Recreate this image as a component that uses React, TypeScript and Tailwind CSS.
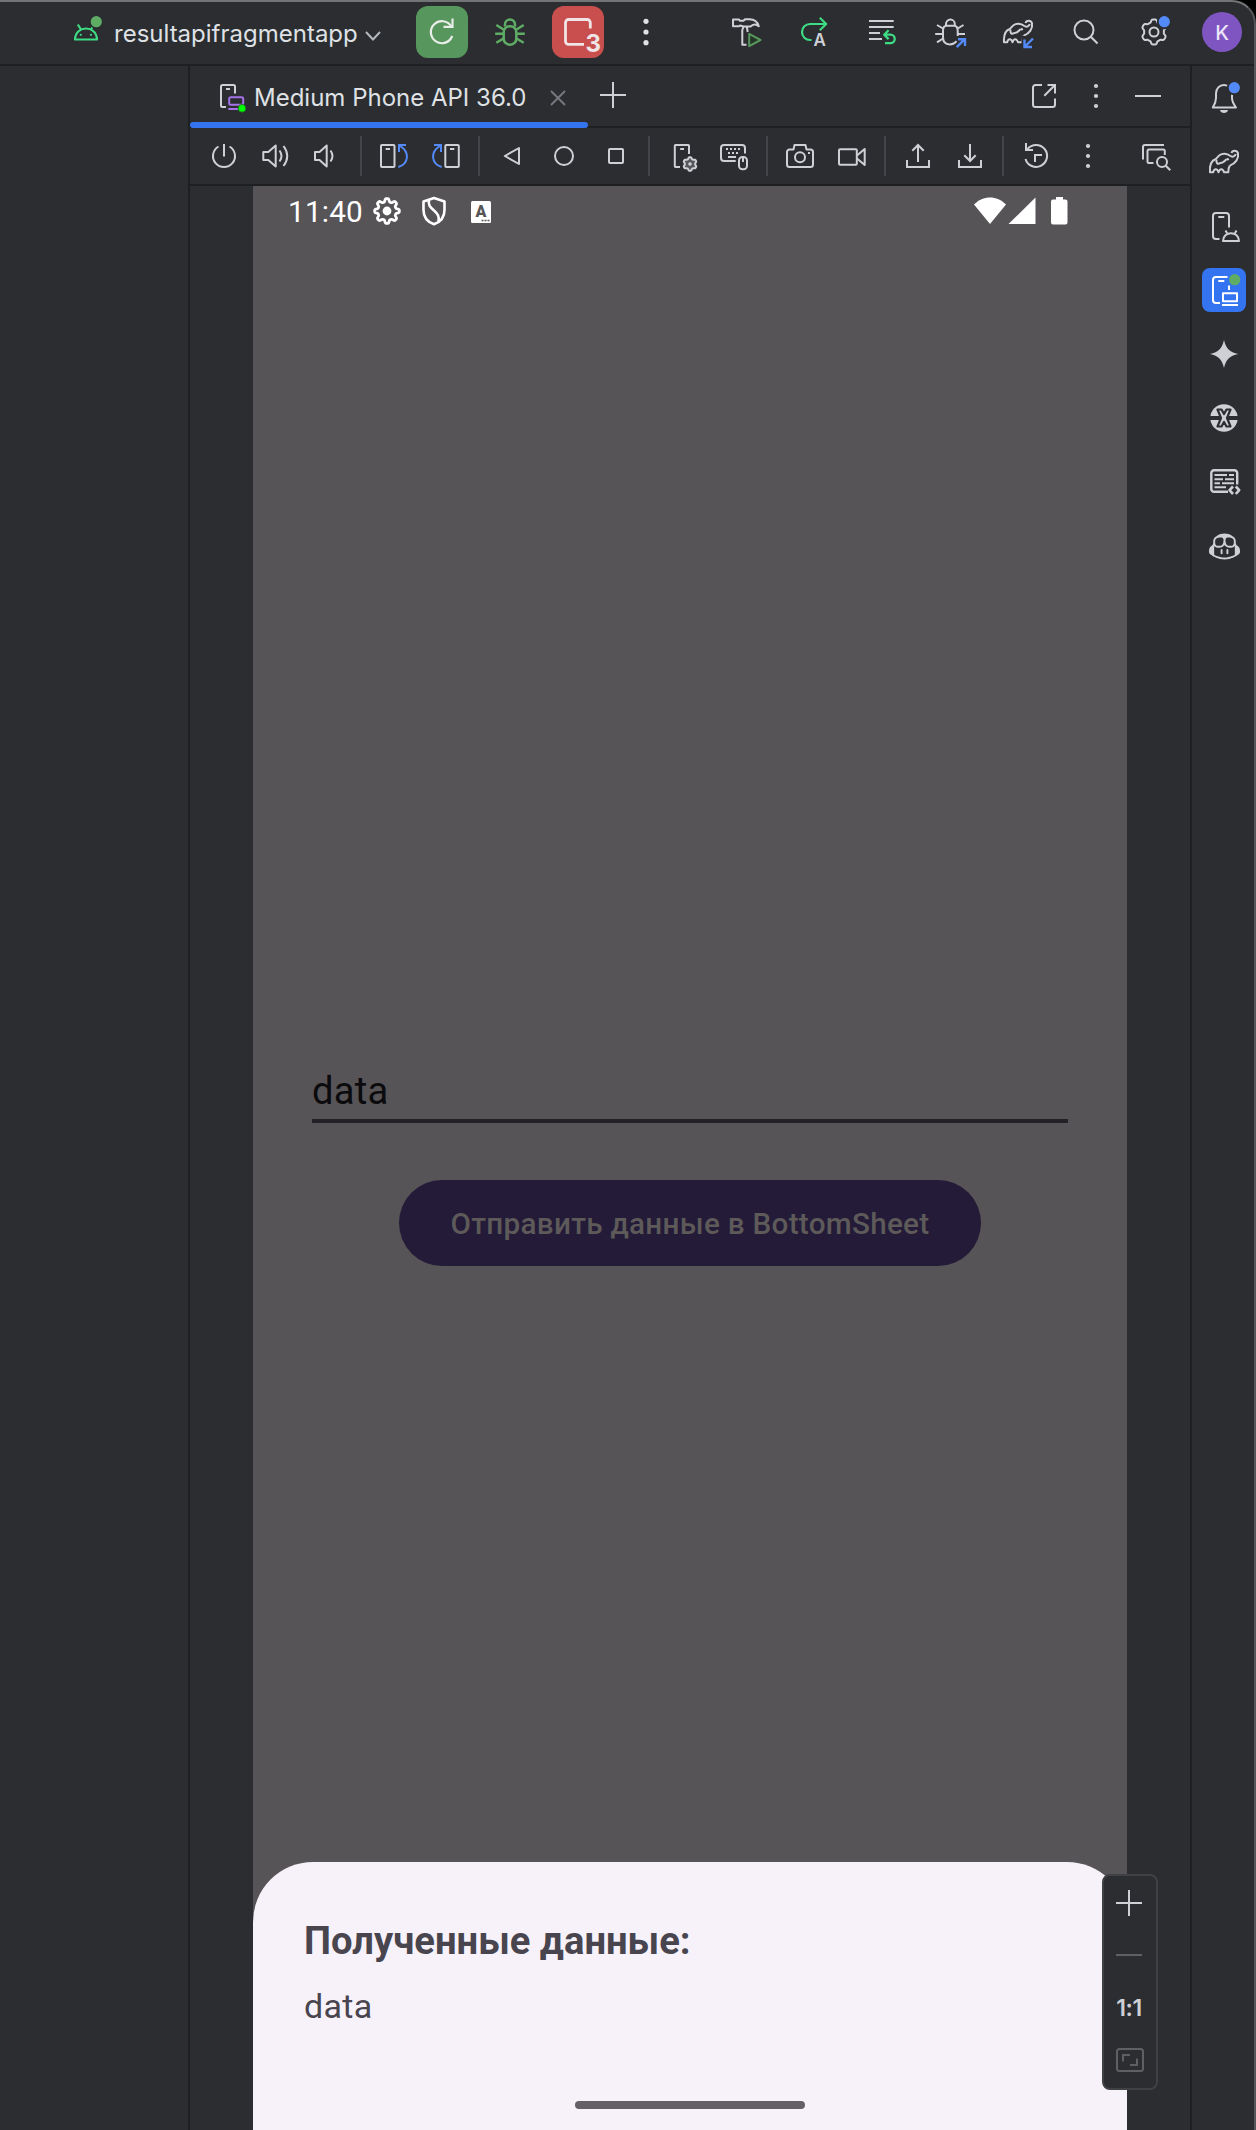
import type { ReactNode } from "react";
import { GoCopilot } from "react-icons/go";

const BG = "#2b2d30";
const BLUE = "#548af7";
const GREEN = "#3ddc84";

function Icon({ children, color = "#ced0d6", sw = 2 }: { children: ReactNode; color?: string; sw?: number }) {
  return (
    <svg
      width="32"
      height="32"
      viewBox="0 0 32 32"
      fill="none"
      stroke={color}
      strokeWidth={sw}
      strokeLinejoin="round"
      className="block shrink-0 overflow-visible"
    >
      {children}
    </svg>
  );
}

function gear(cx: number, cy: number, r: number, amp: number, teeth: number) {
  const pts: string[] = [];
  for (let i = 0; i < 120; i++) {
    const t = (i / 120) * Math.PI * 2;
    const wave = Math.tanh(2 * Math.cos(teeth * t));
    const rad = r + amp * wave;
    pts.push(`${(cx + rad * Math.sin(t)).toFixed(2)} ${(cy - rad * Math.cos(t)).toFixed(2)}`);
  }
  return `M${pts.join("L")}Z`;
}

const Badge = ({ color }: { color: string }) => (
  <circle cx="26.3" cy="5.7" r="5.6" fill={color} stroke="none" />
);

const Dots = ({ big = false }: { big?: boolean }) => (
  <Icon>
    <g fill={big ? "#dfe1e5" : "#ced0d6"} stroke="none">
      <circle cx="16" cy={big ? 5.3 : 6} r={big ? 2.6 : 2.1} />
      <circle cx="16" cy="16" r={big ? 2.6 : 2.1} />
      <circle cx="16" cy={big ? 26.7 : 26} r={big ? 2.6 : 2.1} />
    </g>
  </Icon>
);

const Elephant = ({ children }: { children?: ReactNode }) => (
  <Icon>
    <path d="M23.5 7C24.3 4 28.8 3.8 30 7.2C31 12.500 27.500 17.500 21.800 19.600" />
    <path d="M27.700 8C27.200 11 24 11.300 22 9.800C19 7.300 14.500 7 11.500 9.200C10 10.300 9 12 7.800 13C3.200 14.500 1.500 19.500 2 26.300H5.200C6.200 22.300 9.300 22.300 10.500 26.300C11.800 22.300 14.800 22.300 16 26.300H20.300C20.300 23.500 20.500 21.500 21.800 19.600" />
    <path d="M8.500 13.500C8 17 9.500 18.700 12 17.200C13.500 16.200 14 17.500 16 15.500C17 14.500 17.800 14.300 18.500 13" />
    <circle cx="19.700" cy="13.300" r="1.300" fill="#ced0d6" stroke="none" />
    {children}
  </Icon>
);

const Cell = ({ children }: { children: ReactNode }) => (
  <div className="flex size-[52px] shrink-0 items-center justify-center">{children}</div>
);

function TopBar() {
  return (
    <header className="flex h-16 shrink-0 items-center border-b-2 border-[#1e1f22] pb-0.5 pr-1.5 pl-[70px]">
      <div className="flex w-[346px] items-center">
        <Icon color={GREEN} sw={2.2}>
          <path d="M5 23.500C5.500 8.800 26.500 8.800 27 23.500Z" />
          <path d="M7.800 8.500L11.300 14M24.200 8.500L20.700 14" />
          <circle cx="10.800" cy="18.800" r="1.100" fill={GREEN} stroke="none" />
          <circle cx="21" cy="18.800" r="1.100" fill={GREEN} stroke="none" />
          <circle cx="26.300" cy="5.700" r="7.300" fill={BG} stroke="none" />
          <Badge color="#5fad65" />
        </Icon>
        <span className="mt-[3px] ml-3 w-[245px] whitespace-nowrap text-[24px] leading-8 text-[#dfe1e5]">resultapifragmentapp</span>
        <svg width="16" height="10" viewBox="0 0 16 10" className="ml-[6px] mt-2" fill="none" stroke="#b4b8bf" strokeWidth="2">
          <path d="M1 1L8 8.500L15 1" />
        </svg>
      </div>
      <div className="flex items-center gap-4">
        <div className="flex size-[52px] items-center justify-center rounded-xl bg-[#57965c]">
          <Icon color="#e9ede9" sw={2.2}>
            <path d="M26.200 20A11 11 0 1 1 25.300 10.500" />
            <path d="M26.500 2.500V10.800H17.500" strokeLinejoin="miter" />
          </Icon>
        </div>
        <Cell>
          <Icon color="#5fad65" sw={2.5}>
            <rect x="9.700" y="10.200" width="12.600" height="18.500" rx="6" />
            <path d="M11 10.500V8.500a5 5 0 0 1 10 0V10.500" />
            <path d="M2.300 9L9.500 13.500M1.200 17.800H9.500M2.300 26.800L9.500 22.500M29.700 9L22.500 13.500M30.800 17.800H22.500M29.700 26.800L22.500 22.500" />
          </Icon>
        </Cell>
        <div className="relative flex size-[52px] items-center justify-center rounded-xl bg-[#c94f4f]">
          <Icon color="#f0e4e6" sw={2.800}>
            <path d="M22 28.300H6.500a3 3 0 0 1-3-3V6.500a3 3 0 0 1 3-3H25.300a3 3 0 0 1 3 3V12.500" />
          </Icon>
          <span className="absolute right-[3px] bottom-[2px] text-[24px] leading-6 font-bold text-[#f0e4e6]">3</span>
        </div>
        <Cell><Dots big /></Cell>
      </div>
      <div className="ml-auto flex items-center gap-4">
        <Cell>
          <Icon>
            <path d="M3 3.500H9L10 4.800H13.500L15 3.300H19.500C24 3.300 27.500 5.800 28.800 10.300C26 7.500 23 8 20.500 10.500H13.500L10 9.500L9 10.300H3Z" />
            <path d="M13.500 10.500L12.300 14V28.800H16.500M16.800 10.500L17.700 16" />
            <path d="M19.200 17.800V30.200L30.500 24Z" fill="#253627" stroke="#57965c" />
          </Icon>
        </Cell>
        <Cell>
          <Icon color={GREEN} sw={2.200}>
            <path d="M13.500 24H12A8 8 0 0 1 12 8H28M21.800 1.800L28.200 8L21.800 14.200" />
            <text x="15.600" y="30" fontSize="17" fontWeight="600" fill="#ced0d6" stroke="none">A</text>
          </Icon>
        </Cell>
        <Cell>
          <Icon>
            <path d="M3 5H27.700M3 11H27.700M3 17H14M3 23H16" />
            <path d="M18.500 18.700H24.500a4.200 4.200 0 0 1 0 8.400H19M22.600 14.300L18.200 18.700L22.600 23.100" stroke={GREEN} strokeWidth="2.300" />
          </Icon>
        </Cell>
        <Cell>
          <Icon>
            <path d="M22.500 25.200C20.500 28 17.800 28.400 15.700 28.400C11 28.400 9 25 9 21V15C9 11.500 10.500 9.700 12.500 9.700H20C22.300 9.700 23.700 11.500 23.700 15V20" />
            <path d="M12 9.700V8a4.400 4.400 0 0 1 8.800 0V9.700" />
            <path d="M3 9L9 12.500M1.200 18H9M3 26.300L9 22.500M29.500 9L23.700 12.500M31 18H23.700" />
            <path d="M22.700 31.200L30.800 23.200M24 23.200H31V30" stroke={BLUE} strokeWidth="2.400" strokeLinejoin="miter" />
          </Icon>
        </Cell>
        <Cell>
          <Elephant>
            <path d="M19.500 20H32V34H19.500Z" fill={BG} stroke="none" />
            <path d="M31 22.500L23 30.500M22.500 23.500V31H30" stroke={BLUE} strokeWidth="2.400" strokeLinejoin="miter" />
          </Elephant>
        </Cell>
        <Cell>
          <Icon>
            <circle cx="14" cy="14" r="9.500" />
            <path d="M20.800 20.800L27.500 27.500" />
          </Icon>
        </Cell>
        <Cell>
          <Icon>
            <path d={gear(16, 16, 11.200, 1.400, 6)} />
            <circle cx="16" cy="16" r="4.500" />
            <circle cx="26.300" cy="5.700" r="7.500" fill={BG} stroke="none" />
            <Badge color={BLUE} />
          </Icon>
        </Cell>
        <Cell>
          <div className="flex size-10 items-center justify-center rounded-full bg-[#7f56c1] pt-0.5 text-[20px] leading-none font-medium text-[#ece4f8]">K</div>
        </Cell>
      </div>
    </header>
  );
}

function TabRow() {
  return (
    <div className="flex h-[62px] shrink-0 items-stretch border-b-2 border-[#1e1f22] pr-[26px]">
      <div className="relative flex w-[398px] items-center pl-7">
        <Icon>
          <path d="M8 27H4.500a1.500 1.500 0 0 1-1.500-1.500V6.500A1.500 1.500 0 0 1 4.500 5H15.500A1.500 1.500 0 0 1 17 6.500V13.500M8 9H12" />
          <rect x="11.200" y="17.200" width="14" height="7.600" rx="1.500" stroke="#a571e6" />
          <path d="M10.300 29H20" stroke="#a571e6" />
          <circle cx="24" cy="28.300" r="3.900" fill="#00ff00" stroke="#1b5e20" strokeWidth=".8" />
        </Icon>
        <span className="mt-1 ml-1 w-[280px] whitespace-nowrap text-[24px] leading-8 text-[#dfe1e5]">Medium Phone API 36.0</span>
        <svg width="16" height="16" viewBox="0 0 16 16" className="mt-1 ml-[16px]" stroke="#777a80" strokeWidth="1.800">
          <path d="M1 1L15 15M15 1L1 15" />
        </svg>
        <div className="absolute inset-x-0 -bottom-0.5 h-1.5 rounded-full bg-[#3574f0]" />
      </div>
      <svg width="26" height="26" viewBox="0 0 26 26" className="ml-3 mt-4" stroke="#ced0d6" strokeWidth="2">
        <path d="M13 0V26M0 13H26" />
      </svg>
      <div className="ml-auto flex items-center gap-5">
        <Icon>
          <path d="M14 5H7.500A2.500 2.500 0 0 0 5 7.500V24.500A2.500 2.500 0 0 0 7.500 27H24.500A2.500 2.500 0 0 0 27 24.500V18.500" />
          <path d="M16.300 15.700L27 5M19.500 5H27V13.500" strokeLinejoin="miter" />
        </Icon>
        <Dots />
        <Icon><path d="M3 16H29" /></Icon>
      </div>
    </div>
  );
}

const Sep = () => <div className="h-10 w-0.5 bg-[#43454a]" />;
const Group = ({ children }: { children: ReactNode }) => <div className="flex gap-5">{children}</div>;

function DeviceToolbar() {
  return (
    <div className="flex h-[58px] shrink-0 items-center gap-4 border-b-2 border-[#1e1f22] pr-[18px] pl-[18px]">
      <Group>
        <Icon><path d="M10.500 6.500A11 11 0 1 0 21.500 6.500M16 4V16.500" /></Icon>
        <Icon>
          <path d="M3.300 12H8.300L15.700 5.500V26.500L8.300 20H3.300Z" />
          <path d="M19.500 10.500Q23.500 16 19.500 21.500M23.500 6Q31 16 23.500 26" />
        </Icon>
        <Icon>
          <path d="M3 12H7.500L14.700 5.500V26.500L7.500 20H3Z" />
          <path d="M18.500 10.500Q22.500 16 18.500 21.500" />
        </Icon>
      </Group>
      <Sep />
      <Group>
        <Icon>
          <rect x="3" y="5" width="13.500" height="22" rx="1" />
          <path d="M7.700 9H12" />
          <path d="M20.300 27C31.500 23.500 31.500 11.500 22 6M28 5H21V12" stroke={BLUE} strokeLinejoin="miter" />
        </Icon>
        <Icon>
          <rect x="15.300" y="5" width="13.500" height="22" rx="1" />
          <path d="M20 9H24.300" />
          <path d="M11.700 27C.5 23.500 .5 11.500 10 6M4 5H11V12" stroke={BLUE} strokeLinejoin="miter" />
        </Icon>
      </Group>
      <Sep />
      <Group>
        <Icon><path d="M8.800 16L23 8V24Z" /></Icon>
        <Icon><circle cx="16" cy="16" r="9" /></Icon>
        <Icon><rect x="9" y="9" width="14" height="14" rx="1" /></Icon>
      </Group>
      <Sep />
      <Group>
        <Icon>
          <path d="M14 27H9.500a.7 .7 0 0 1-.7-.7V5.700A.7 .7 0 0 1 9.500 5H22.300A.7 .7 0 0 1 23 5.700V14M14.200 9H18" />
          <path d={gear(24, 24, 6, 0.8, 6)} fill="#55575b" />
          <circle cx="24" cy="24" r="1.800" fill="#ced0d6" stroke="none" />
        </Icon>
        <Icon>
          <path d="M17.700 21H6A3 3 0 0 1 3 18V8A3 3 0 0 1 6 5H24A3 3 0 0 1 27 8V13.500M10 17H18" />
          <path d="M8 9H22.500" strokeDasharray="2 2" />
          <path d="M10 13H20.500" strokeDasharray="2 2" />
          <rect x="21" y="17" width="8" height="12.300" rx="3.500" />
          <path d="M25 17.500V22" />
        </Icon>
      </Group>
      <Sep />
      <Group>
        <Icon>
          <path d="M5.500 27A2.500 2.500 0 0 1 3 24.500V12A2.500 2.500 0 0 1 5.500 9.500H9.500L10.500 5H21.500L22.500 9.500H26.500A2.500 2.500 0 0 1 29 12V24.500A2.500 2.500 0 0 1 26.500 27Z" />
          <circle cx="16" cy="17.300" r="5" />
          <path d="M24 13H26" />
        </Icon>
        <Icon>
          <rect x="3" y="9.300" width="17.800" height="15.500" rx="1" />
          <path d="M21 15.500L28.700 9V25L21 18.500" />
        </Icon>
      </Group>
      <Sep />
      <Group>
        <Icon><path d="M5 20V27H27V20M16 22V5.500M10.300 10.700L16 5L21.700 10.700" strokeLinejoin="miter" /></Icon>
        <Icon><path d="M5 20V27H27V20M16 4V20.500M10.300 15.300L16 21L21.700 15.300" strokeLinejoin="miter" /></Icon>
      </Group>
      <Sep />
      <Group>
        <Icon>
          <path d="M5.500 19A11 11 0 1 0 7.500 9M6 3V10H13M22 15H15V22" strokeLinejoin="miter" />
        </Icon>
        <Dots />
      </Group>
      <div className="ml-auto">
        <Icon>
          <path d="M3 19.500V7A2 2 0 0 1 5 5H24M13.500 23H9A1.500 1.500 0 0 1 7.500 21.500V11A1.500 1.500 0 0 1 9 9.500H23A1.500 1.500 0 0 1 24.800 11V15" />
          <circle cx="22" cy="22" r="5" />
          <path d="M25.800 25.800L30.300 30.300" />
        </Icon>
      </div>
    </div>
  );
}

function StatusBar() {
  return (
    <div className="flex h-[50px] shrink-0 items-center pr-[59px] pl-[35px] text-white">
      <span className="mt-px w-[84px] text-[29.700px] leading-[36px] tracking-[0.2px]">11:40</span>
      <svg width="28" height="28" viewBox="0 0 28 28" className="ml-px" fill="none" stroke="#fff" strokeWidth="2.800">
        <path d={gear(14, 14, 10.800, 1.600, 8)} />
        <circle cx="14" cy="14" r="4.400" fill="#fff" stroke="none" />
      </svg>
      <svg width="26" height="30" viewBox="0 0 26 30" className="ml-[20px]" fill="none" stroke="#fff" strokeWidth="2.600">
        <path d="M13 2L23.500 5.500V14C23.500 21 19.500 26 13 28.300C6.500 26 2.500 21 2.500 14V5.500Z" strokeLinejoin="round" />
        <path d="M8 4C7 9 9 11 13 14.500C17 18 18.500 20.500 17.500 25.500" />
      </svg>
      <svg width="20" height="22" viewBox="0 0 20 22" className="ml-[24px] mt-0.5">
        <rect width="20" height="22" rx="1.500" fill="#fff" />
        <text x="10" y="16" fontSize="16" fontWeight="900" textAnchor="middle" fill="#575457">A</text>
        <path d="M10.500 19.500H18.500" stroke="#575457" strokeWidth="1.600" strokeDasharray="2 1" />
      </svg>
      <svg width="94" height="28" viewBox="0 0 94 28" className="ml-auto" fill="#fff">
        <path d="M0 7.500C9-2 23-2 32 7.500L16 27Z" />
        <path d="M61.500 .5V27H34.500Z" />
        <path d="M82 0H89V2.500H91.500A2 2 0 0 1 93.500 4.500V25.500A2 2 0 0 1 91.500 27.500H79A2 2 0 0 1 77 25.500V4.500A2 2 0 0 1 79 2.500H82Z" />
      </svg>
    </div>
  );
}

function Phone() {
  return (
    <div className="flex w-[874px] shrink-0 flex-col bg-[#575457] font-['Roboto',sans-serif]">
      <StatusBar />
      <div className="mx-[59px] mt-[833px] h-[54px] border-b-4 border-[#232127] text-[38.200px] leading-[45px] tracking-[0.2px] text-[#0b0a0c]">
        data
      </div>
      <div className="mt-[57px] flex h-[86px] w-[582px] items-center justify-center self-center rounded-full bg-[#231b38] pt-0.5 text-[29.700px] font-medium tracking-[0.27px] whitespace-nowrap text-[#5d5a59]">
        Отправить данные в BottomSheet
      </div>
      <div className="mt-auto flex h-[268px] flex-col rounded-t-[60px] bg-[#f7f2fa] px-[51px] pt-14 text-[#49454f]">
        <span className="text-[38.200px] leading-[46px] font-bold">Полученные данные:</span>
        <span className="mt-[22px] text-[34px] leading-[40px] tracking-[0.3px]">data</span>
        <div className="mt-auto mb-[21px] h-2 w-[230px] self-center rounded-full bg-[#646065]" />
      </div>
    </div>
  );
}

function ZoomPanel() {
  return (
    <div className="absolute top-[1808px] left-[912px] flex h-[216px] w-14 flex-col items-center rounded-lg border-2 border-[#3f4143] bg-[#2b2d30]">
      <svg width="26" height="26" viewBox="0 0 26 26" className="mt-[14px] mr-0.5" stroke="#ced0d6" strokeWidth="2">
        <path d="M13 0V26M0 13H26" />
      </svg>
      <div className="mt-[38px] mr-0.5 h-0.5 w-[26px] bg-[#5e6062]" />
      <span className="mt-[39px] mr-0.5 text-[23px] leading-[26px] font-semibold tracking-[-0.5px] text-[#ced0d6]">1:1</span>
      <svg width="28" height="24" viewBox="0 0 28 24" className="mt-[27px]" fill="none" stroke="#5e6062" strokeWidth="2">
        <rect x="1" y="1" width="26" height="22" rx="2.500" />
        <path d="M7 13.500V7H14M21 10.500V17H14" />
      </svg>
    </div>
  );
}

const SideCell = ({ children, active = false }: { children: ReactNode; active?: boolean }) => (
  <div className={active ? "flex size-11 items-center justify-center rounded-lg bg-[#3574f0]" : "flex size-11 items-center justify-center"}>
    {children}
  </div>
);

function SideBar() {
  return (
    <aside className="flex w-16 shrink-0 flex-col items-center gap-5 border-l-2 border-[#1e1f22] pt-2.5 pl-0.5">
      <SideCell>
        <Icon>
          <path d="M4.800 25.500C7 22 8 19.500 8 16V11.500C8 6.500 11.500 3 16 3S24 6.500 24 11.500V16C24 19.500 25.500 22 28 25.500Z" />
          <path d="M12 28H20C19.500 32 12.500 32 12 28Z" fill="#ced0d6" stroke="none" />
          <circle cx="26.300" cy="5.700" r="7.500" fill={BG} stroke="none" />
          <Badge color={BLUE} />
        </Icon>
      </SideCell>
      <SideCell><Elephant /></SideCell>
      <SideCell>
        <Icon>
          <path d="M11.500 29H8A3 3 0 0 1 5 26V6A3 3 0 0 1 8 3H18A3 3 0 0 1 21 6V17.500M10.300 7H16.300" />
          <path d="M15 31C15.500 20.500 30.500 20.500 31 31ZM17.500 20.500L19.500 24M28.500 20.500L26.500 24" />
        </Icon>
      </SideCell>
      <SideCell active>
        <Icon color="#ffffff">
          <path d="M12 29H8A3 3 0 0 1 5 26V6A3 3 0 0 1 8 3H19.500M10.300 7H16.300M21 11.500V16M14 31H30" />
          <rect x="15" y="19.200" width="14" height="8" />
          <circle cx="26.700" cy="5.700" r="5.600" fill="#5fad65" stroke="none" />
        </Icon>
      </SideCell>
      <SideCell>
        <Icon>
          <path d="M16 2C18 10.500 21.500 14 30.300 16C21.500 18 18 21.500 16 30C14 21.500 10.500 18 2 16C10.500 14 14 10.500 16 2Z" fill="#ced0d6" stroke="none" />
        </Icon>
      </SideCell>
      <SideCell>
        <Icon>
          <circle cx="16" cy="16" r="13.700" fill="#ced0d6" stroke="none" />
          <path d="M2 16H30" stroke={BG} strokeWidth="4" />
          <path
            d="M9.500 7.500H13.500L16 12L18.500 7.500H22.500L19 16L22.500 24.500H18.500L16 20L13.500 24.500H9.500L13 16Z"
            fill="#ced0d6"
            stroke={BG}
            strokeWidth="2.200"
          />
        </Icon>
      </SideCell>
      <SideCell>
        <Icon>
          <path d="M20 25.800H6A2.700 2.700 0 0 1 3.300 23V7A2.700 2.700 0 0 1 6 4.300H26.500A2.700 2.700 0 0 1 29.200 7V18.500" strokeWidth="2.400" />
          <path d="M6.500 9H19M21 9H26M6.500 13.300H15M17 13.300H26M6.500 17.300H12M14 17.300H26M6.500 21.300H18" />
          <path d="M25 20.500L21.500 24.200L25 28M27.800 20.500L31.200 24.200L27.800 28" strokeWidth="2.600" />
        </Icon>
      </SideCell>
      <SideCell><GoCopilot size={31} color="#ced0d6" /></SideCell>
    </aside>
  );
}

export default function App() {
  return (
    <div className="h-[2130px] w-[1256px] overflow-hidden bg-black font-['Inter',sans-serif]">
      <div className="flex h-full flex-col overflow-hidden rounded-tr-[24px] border-t-2 border-r-2 border-t-[#737476] border-r-[#55565a] bg-[#2b2d30]">
        <TopBar />
        <div className="flex min-h-0 flex-1">
          <div className="w-[190px] shrink-0 border-r-2 border-[#1e1f22]" />
          <main className="relative flex min-w-0 flex-1 flex-col">
            <TabRow />
            <DeviceToolbar />
            <div className="flex min-h-0 flex-1 pl-[63px]">
              <Phone />
            </div>
            <ZoomPanel />
          </main>
          <SideBar />
        </div>
      </div>
    </div>
  );
}
